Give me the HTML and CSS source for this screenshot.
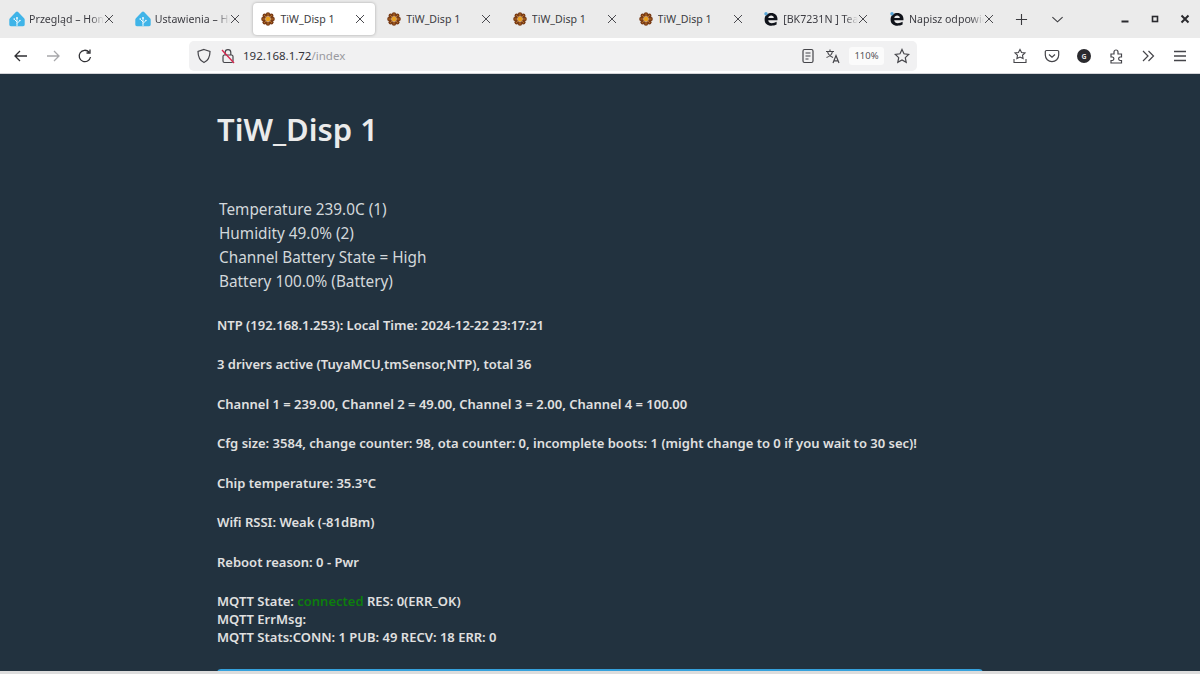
FILE: index.html
```html
<!DOCTYPE html>
<html lang="pl">
<head>
<meta charset="utf-8">
<title>TiW_Disp 1</title>
<link rel="stylesheet" href="styles.css">
</head>
<body>
<svg class="defs" width="0" height="0" aria-hidden="true">
  <defs>
    <symbol id="ha" viewBox="0 0 16 16">
      <path d="M6.900 1.100a1.500 1.500 0 0 1 2.200 0l6 6.100c.4.400.6.900.6 1.400v5c0 .9-.7 1.600-1.600 1.600H1.900C1 15.200.3 14.500.3 13.600v-5c0-.5.2-1 .6-1.400z" fill="#3fb4e8"/>
      <path d="M8 15V7.500M8 11 5.500 8.500M8 12.500l2.600-2.600" stroke="#fff" stroke-width=".9" fill="none"/>
      <circle cx="8" cy="7" r=".9" fill="#fff"/><circle cx="5.200" cy="8" r=".8" fill="#fff"/><circle cx="10.900" cy="9.500" r=".8" fill="#fff"/>
    </symbol>
    <symbol id="flower" viewBox="0 0 14 14">
      <g fill="#7a3d17">
        <circle cx="7" cy="2.400" r="2.200"/><circle cx="7" cy="11.600" r="2.200"/><circle cx="2.400" cy="7" r="2.200"/><circle cx="11.600" cy="7" r="2.200"/>
        <circle cx="3.700" cy="3.700" r="2.200"/><circle cx="10.300" cy="3.700" r="2.200"/><circle cx="3.700" cy="10.300" r="2.200"/><circle cx="10.300" cy="10.300" r="2.200"/>
      </g>
      <g stroke="#d98a2b" stroke-width=".7">
        <path d="M7 1.500v11M1.500 7h11M3.100 3.100l7.800 7.800M10.900 3.100l-7.800 7.800"/>
      </g>
      <circle cx="7" cy="7" r="2.200" fill="#e9a11f"/>
    </symbol>
    <symbol id="edge" viewBox="0 0 14 14">
      <path d="M13.400 8.200H4.200c.2 2 1.700 3 3.600 3 1.600 0 3.400-.5 4.800-1.400v2.700c-1.500.8-3.400 1.200-5.200 1.200C3.200 13.700.6 11.300.6 7.400.6 3.700 3.400 1 7.300 1c3.700 0 6.200 2.500 6.200 6.200zM4.300 5.900h5.500C9.700 4.500 8.700 3.600 7.100 3.600 5.600 3.600 4.600 4.500 4.300 5.900z" fill="#10131a"/>
      <circle cx="2" cy="1.800" r="1.700" fill="#5aa7d8"/>
    </symbol>
    <symbol id="close" viewBox="0 0 10 10">
      <path d="M1 1l8 8M9 1 1 9" stroke="currentColor" stroke-width="1" fill="none"/>
    </symbol>
  </defs>
</svg>

<header class="browser">
  <div class="tabstrip">
    <div class="tab tab-narrow"><svg class="fav fav-ha"><use href="#ha"/></svg><span class="tab-title">Przegląd – Home</span><svg class="x"><use href="#close"/></svg></div>
    <div class="tab tab-narrow"><svg class="fav fav-ha"><use href="#ha"/></svg><span class="tab-title">Ustawienia – Home</span><svg class="x"><use href="#close"/></svg></div>
    <div class="tab active"><svg class="fav"><use href="#flower"/></svg><span class="tab-title">TiW_Disp 1</span><svg class="x"><use href="#close"/></svg></div>
    <div class="tab"><svg class="fav"><use href="#flower"/></svg><span class="tab-title">TiW_Disp 1</span><svg class="x"><use href="#close"/></svg></div>
    <div class="tab"><svg class="fav"><use href="#flower"/></svg><span class="tab-title">TiW_Disp 1</span><svg class="x"><use href="#close"/></svg></div>
    <div class="tab"><svg class="fav"><use href="#flower"/></svg><span class="tab-title">TiW_Disp 1</span><svg class="x"><use href="#close"/></svg></div>
    <div class="tab tab-narrow"><svg class="fav"><use href="#edge"/></svg><span class="tab-title">[BK7231N ] Teardown</span><svg class="x"><use href="#close"/></svg></div>
    <div class="tab tab-narrow"><svg class="fav"><use href="#edge"/></svg><span class="tab-title">Napisz odpowiedź</span><svg class="x"><use href="#close"/></svg></div>
    <svg class="strip-btn" viewBox="0 0 14 14"><path d="M7 1v12M1 7h12" stroke="#3a3a3e" stroke-width="1.200" fill="none"/></svg>
    <svg class="strip-btn chevron" viewBox="0 0 14 14"><path d="M1.500 4.500 7 9.500l5.500-5" stroke="#3a3a3e" stroke-width="1.200" fill="none"/></svg>
    <div class="win-btns">
      <svg class="win" viewBox="0 0 10 10"><path d="M1.500 7.500h7" stroke="#2a2a2e" stroke-width="2"/></svg>
      <svg class="win" viewBox="0 0 10 10"><rect x="2.500" y="2.500" width="5" height="5" fill="none" stroke="#2a2a2e" stroke-width="1.600"/></svg>
      <svg class="win" viewBox="0 0 10 10"><path d="M1.500 1.500l7 7M8.500 1.500l-7 7" stroke="#2a2a2e" stroke-width="2"/></svg>
    </div>
  </div>
  <div class="navbar">
    <div class="nav-left">
      <svg class="ico" viewBox="0 0 16 16"><path d="M14 8H2.500M7 3 2 8l5 5" stroke="#2f2f33" stroke-width="1.300" fill="none"/></svg>
      <svg class="ico" viewBox="0 0 16 16"><path d="M2 8h11.500M9 3l5 5-5 5" stroke="#a8a8ab" stroke-width="1.300" fill="none"/></svg>
      <svg class="ico" viewBox="0 0 16 16"><path d="M13.500 9A5.700 5.700 0 1 1 12 4M13 1.500V5H9.500" stroke="#2f2f33" stroke-width="1.300" fill="none"/></svg>
    </div>
    <div class="urlbar">
      <svg class="ico shield" viewBox="0 0 16 16"><path d="M8 1.500 14 3.500c0 5-1.500 9-6 11-4.500-2-6-6-6-11z" stroke="#45454a" stroke-width="1.200" fill="none"/></svg>
      <svg class="ico lock" viewBox="0 0 16 16"><rect x="3" y="7" width="10" height="7.500" rx="1.500" stroke="#45454a" stroke-width="1.200" fill="none"/><path d="M5.200 7V4.500a2.800 2.800 0 0 1 5.600 0V7" stroke="#45454a" stroke-width="1.200" fill="none"/><path d="M2 2l12 13" stroke="#d7264f" stroke-width="1.300"/></svg>
      <span class="url"><span class="url-host">192.168.1.72</span><span class="url-path">/index</span></span>
      <div class="url-end">
        <svg class="ico" viewBox="0 0 16 16"><rect x="3" y="1.500" width="10" height="13" rx="1.500" stroke="#45454a" stroke-width="1.200" fill="none"/><path d="M5.500 5h5M5.500 8h5M5.500 11h3" stroke="#45454a" stroke-width="1.100"/></svg>
        <svg class="ico translate" viewBox="0 0 16 16"><path d="M1 3.500h8M5 1.500v2M7.500 3.500C7 6 4.500 8.500 1.500 9.500M2.500 3.500C3 6 5.500 8.500 8 9.500" stroke="#45454a" stroke-width="1.100" fill="none"/><path d="M8 15l3-7.500 3 7.500M9 12.800h4" stroke="#45454a" stroke-width="1.200" fill="none"/></svg>
        <span class="zoom-pill">110%</span>
        <svg class="ico" viewBox="0 0 16 16"><path d="M8 1.500l2 4.300 4.700.6-3.400 3.200.9 4.700L8 12l-4.200 2.300.9-4.700L1.300 6.400 6 5.800z" stroke="#45454a" stroke-width="1.200" fill="none"/></svg>
      </div>
    </div>
    <div class="nav-right">
      <svg class="ico" viewBox="0 0 16 16"><path d="M8 1.500l1.600 3 3.400.5-2.500 2.300.6 3.300L8 9l-3.100 1.600.6-3.300L3 5l3.400-.5zM2 11v3.500h12V11" stroke="#45454a" stroke-width="1.100" fill="none"/></svg>
      <svg class="ico" viewBox="0 0 16 16"><path d="M2.500 2.500h11a1.200 1.200 0 0 1 1.200 1.200V7a6.700 6.700 0 0 1-13.400 0V3.700a1.200 1.200 0 0 1 1.200-1.200z" stroke="#45454a" stroke-width="1.200" fill="none"/><path d="M5 6.500l3 2.800 3-2.800" stroke="#45454a" stroke-width="1.200" fill="none"/></svg>
      <svg class="ico" viewBox="0 0 16 16"><circle cx="8" cy="8" r="7" fill="#2a2a2e"/><text class="avatar-letter" x="8" y="10.500" text-anchor="middle">G</text></svg>
      <svg class="ico" viewBox="0 0 16 16"><path d="M3 6h3V4a2 2 0 0 1 4 0v2h3.500v3h-1.500a1.800 1.800 0 0 0 0 3.500h1.500V15H3v-2.500h1.500a1.800 1.800 0 0 0 0-3.500H3z" stroke="#45454a" stroke-width="1.200" fill="none"/></svg>
      <svg class="ico" viewBox="0 0 16 16"><path d="M3 3l5 5-5 5M8.500 3l5 5-5 5" stroke="#45454a" stroke-width="1.200" fill="none"/></svg>
      <svg class="ico" viewBox="0 0 16 16"><path d="M2 3.500h12M2 8h12M2 12.500h12" stroke="#45454a" stroke-width="1.300" fill="none"/></svg>
    </div>
  </div>
</header>

<main class="page">
  <div class="content">
    <h1 class="title">TiW_Disp 1</h1>
    <ul class="readings">
      <li>Temperature 239.0C (1)</li>
      <li>Humidity 49.0% (2)</li>
      <li>Channel Battery State = High</li>
      <li>Battery 100.0% (Battery)</li>
    </ul>
    <div class="stats">
      <p>NTP (192.168.1.253): Local Time: 2024-12-22 23:17:21</p>
      <p>3 drivers active (TuyaMCU,tmSensor,NTP), total 36</p>
      <p>Channel 1 = 239.00, Channel 2 = 49.00, Channel 3 = 2.00, Channel 4 = 100.00</p>
      <p>Cfg size: 3584, change counter: 98, ota counter: 0, incomplete boots: 1 (might change to 0 if you wait to 30 sec)!</p>
      <p>Chip temperature: 35.3°C</p>
      <p>Wifi RSSI: Weak (-81dBm)</p>
      <p>Reboot reason: 0 - Pwr</p>
      <p>MQTT State: <span class="ok">connected</span> RES: 0(ERR_OK)<br>MQTT ErrMsg:<br>MQTT Stats:CONN: 1 PUB: 49 RECV: 18 ERR: 0</p>
    </div>
    <div class="action-button"></div>
  </div>
</main>
</body>
</html>
```

FILE: styles.css
```css
* { box-sizing: border-box; }
html, body { margin: 0; height: 100%; overflow: hidden; }
body { width: 1200px; height: 674px; display: flex; flex-direction: column; background: #22323f; font-family: "Noto Sans", "Open Sans", sans-serif; }
.defs { position: absolute; }

.browser { flex: none; height: 74px; background: #fff; }
.tabstrip { height: 38px; background: #ebebeb; display: flex; align-items: center; gap: 3.700px; padding-left: 1.600px; color: #2b2b30; }
.tab { width: 122px; height: 32px; flex: none; display: flex; align-items: center; padding: 0 9.500px 0 8.500px; border-radius: 4px; font-size: 10.600px; color: #3c3c42; }
.tab.active { background: #fff; box-shadow: 0 0 3px rgba(0,0,0,.3); }
.fav { width: 14px; height: 14px; flex: none; margin-right: 5px; }
.fav-ha { width: 16px; height: 16px; margin-left: -1px; margin-right: 4px; }
.tab-title { flex: 1; min-width: 0; white-space: nowrap; overflow: hidden; }
.tab-narrow .tab-title { -webkit-mask-image: linear-gradient(to right, #000 82%, transparent); mask-image: linear-gradient(to right, #000 82%, transparent); }
.x { width: 10px; height: 10px; flex: none; color: #4a4a4f; }
.strip-btn { width: 13px; height: 13px; flex: none; margin-left: 8.300px; margin-right: 5.300px; }
.chevron { margin-left: 13.300px; margin-right: 0; }
.win-btns { margin-left: auto; display: flex; gap: 20px; padding-right: 10px; }
.win { width: 10px; height: 10px; }

.navbar { height: 36px; display: flex; align-items: center; background: #fff; border-bottom: 1px solid #d4d4d8; }
.nav-left { width: 189px; padding-left: 13px; display: flex; gap: 16px; }
.ico { width: 16px; height: 16px; flex: none; }
.urlbar { width: 728px; height: 30px; background: #f1f1f2; border-radius: 5px; display: flex; align-items: center; padding: 0 7px 0 7px; }
.lock { margin-left: 8px; }
.url { margin-left: 7px; font-size: 11.500px; color: #33333a; }
.url-path { color: #9a9aa0; }
.url-end { margin-left: auto; display: flex; align-items: center; gap: 7px; }
.url-end .translate { margin-left: 2px; margin-right: 1px; }
.zoom-pill { width: 35px; height: 18px; background: #fbfbfb; border-radius: 3px; font-size: 9.500px; color: #55555a; display: flex; align-items: center; justify-content: center; margin-right: 3px; }
.nav-right { flex: 1; display: flex; justify-content: flex-end; gap: 16px; padding-right: 12px; }
.avatar-letter { font-size: 7px; fill: #ddd; font-weight: 700; }

.page { flex: 1; min-height: 0; color: #e0e0e0; overflow: hidden; border-bottom: 3px solid #ddd; }
.content { width: 766px; margin-left: 217px; }
.title { margin: 35px 0 0; font-size: 31px; line-height: 40px; font-weight: 600; color: #ebebeb; }
.readings { list-style: none; margin: 48px 0 0; padding: 0 0 0 2px; font-size: 15.330px; line-height: 24px; color: #d3d8db; }
.stats { margin-top: 22.500px; font-size: 13px; line-height: 18px; font-weight: 600; }
.stats p { margin: 0 0 21.500px; }
.stats p:last-child { margin-bottom: 0; }
.ok { color: #0d7d0d; }
.action-button { height: 30px; margin-top: 22.500px; background: #35a1dc; border-radius: 4px; }
```
